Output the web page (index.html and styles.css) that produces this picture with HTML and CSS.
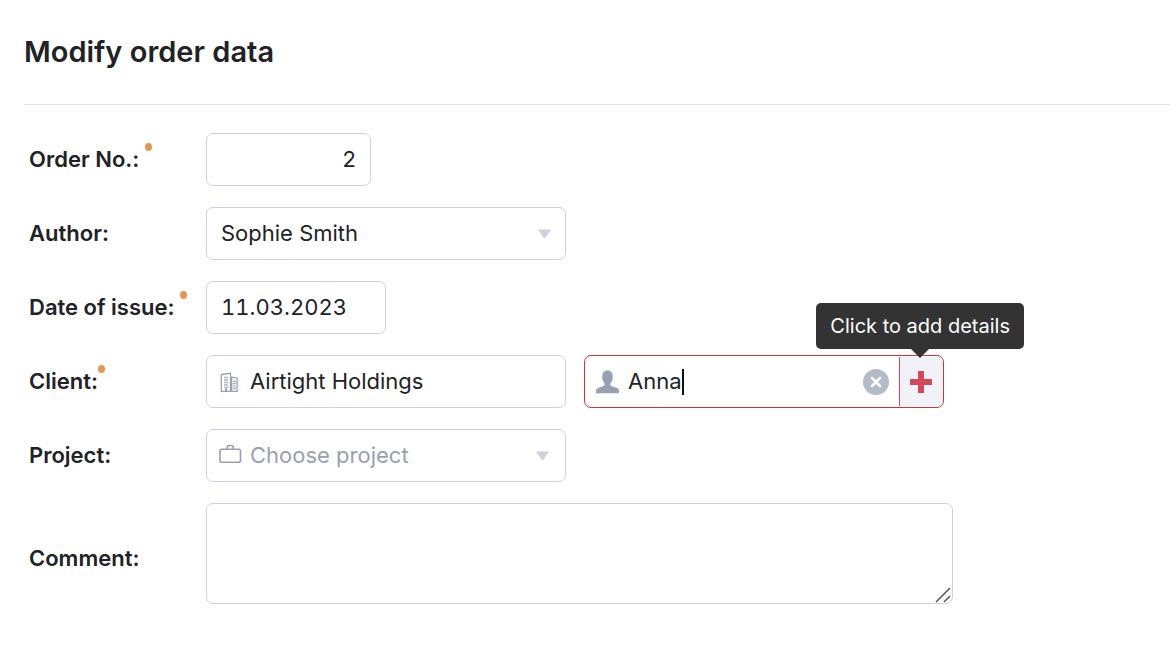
FILE: index.html
```html
<!DOCTYPE html>
<html lang="en">
<head>
  <meta charset="UTF-8">
  <meta name="viewport" content="width=device-width, initial-scale=1.0">
  <title>Modify order data</title>
  <link rel="stylesheet" href="styles.css">
</head>
<body>
  <header class="page-header">
    <h1>Modify order data</h1>
  </header>

  <form class="order-form">
    <div class="form-row">
      <label class="row-label" for="order-no">Order No.: <span class="required-dot"></span></label>
      <input class="field field-number" type="text" id="order-no" value="2">
    </div>

    <div class="form-row">
      <label class="row-label" for="author">Author:</label>
      <div class="field field-select">
        <select id="author">
          <option>Sophie Smith</option>
        </select>
        <svg class="arrow" viewBox="0 0 13 10" aria-hidden="true"><path d="M1 .5h11q1 0 .5 1L7.300 8.800q-.8 1-1.600 0L.5 1.500Q0 .5 1 .5z"/></svg>
      </div>
    </div>

    <div class="form-row">
      <label class="row-label" for="issue-date">Date of issue: <span class="required-dot"></span></label>
      <input class="field field-date" type="text" id="issue-date" value="11.03.2023">
    </div>

    <div class="form-row">
      <label class="row-label" for="client">Client:<span class="required-dot"></span></label>
      <div class="client-fields">
        <div class="field field-icon">
          <svg class="icon" viewBox="0 0 24 24" aria-hidden="true">
            <g fill="none" stroke="#98a1b0" stroke-width="1.300">
              <path d="M3.300 21.300V4.500l9.200-1.200v18z"/>
              <path d="M13.700 7.200l5.400 1v13.100h-5.400z"/>
            </g>
            <g fill="none" stroke="#98a1b0" stroke-width="1.300">
              <path d="M6.200 7.500h3.600M6.200 10h3.600M6.200 12.500h3.600M6.200 15h3.600M6.200 17.500h3.600" stroke-dasharray="1.600 .4"/>
              <path d="M15.200 11.300h2.400M15.200 13.700h2.400M15.200 16.100h2.400M15.200 18.500h2.400"/>
              <path d="M8 18.500v3" stroke-width="2"/>
            </g>
          </svg>
          <input type="text" id="client" value="Airtight Holdings">
        </div>

        <div class="field field-icon field-error">
          <svg class="icon" viewBox="0 0 24 24" aria-hidden="true"><path fill="#98a1b0" d="M11.500 .5c3.300 0 5.200 2.300 5.200 5.400 0 .7-.1 1.200-.2 1.700.7.2.5 1.700-.4 2.600-.4 1.600-1 2.500-1.800 3.200v1.700c.5.8 1.500 1.200 2.900 1.600 3.400 1 5.800 1.600 5.800 4.200V23.200H0v-2.300c0-2.600 2.400-3.200 5.800-4.200 1.400-.4 2.400-.8 2.900-1.600v-1.700c-.8-.7-1.400-1.600-1.800-3.200-.9-.9-1.100-2.400-.4-2.600-.1-.5-.2-1-.2-1.700C6.300 2.800 8.200 .5 11.500 .5z"/></svg>
          <input class="contact-input" type="text" aria-label="Contact" value="Anna">
          <span class="caret"></span>
          <button class="clear-btn" type="button" aria-label="Clear">
            <svg viewBox="0 0 26 26" aria-hidden="true"><circle cx="13" cy="13" r="13" fill="#b3bac8"/><path d="M9 9l8 8M17 9l-8 8" stroke="#fff" stroke-width="2.500" stroke-linecap="round"/></svg>
          </button>
          <button class="add-btn" type="button" aria-label="Add" aria-describedby="add-tip">
            <svg viewBox="0 0 22 22" aria-hidden="true"><path fill="#d4485c" d="M8.500 0h5q.5 0 .5.500V8h7.500q.5 0 .5.500v5q0 .5-.5.500H14v7.500q0 .5-.5.500h-5q-.5 0-.5-.5V14H.5q-.5 0-.5-.5v-5Q0 8 .5 8H8V.5Q8 0 8.500 0z"/></svg>
          </button>
          <div class="tooltip" id="add-tip" role="tooltip">Click to add details</div>
        </div>
      </div>
    </div>

    <div class="form-row">
      <label class="row-label" for="project">Project:</label>
      <div class="field field-icon field-select field-empty">
        <svg class="icon" viewBox="0 0 24 24" aria-hidden="true"><g fill="none" stroke="#98a1b0" stroke-width="1.600"><rect x="2" y="5.300" width="20.500" height="13" rx="1.800"/><path d="M9.200 5.300V3.500q0-2 2-2h2q2 0 2 2v1.800"/></g></svg>
        <select id="project">
          <option>Choose project</option>
        </select>
        <svg class="arrow" viewBox="0 0 13 10" aria-hidden="true"><path d="M1 .5h11q1 0 .5 1L7.300 8.800q-.8 1-1.600 0L.5 1.500Q0 .5 1 .5z"/></svg>
      </div>
    </div>

    <div class="form-row">
      <label class="row-label comment-label" for="comment">Comment:</label>
      <div class="comment-box">
        <textarea class="field" id="comment"></textarea>
        <svg class="resizer" viewBox="0 0 16 16" aria-hidden="true"><path d="M1 15L15 1M9 15l6-6" stroke="#555" stroke-width="1.500"/></svg>
      </div>
    </div>
  </form>
</body>
</html>
```
FILE: styles.css
```css
* {
  box-sizing: border-box;
}

body {
  font-family: Inter, "Liberation Sans", sans-serif;
  font-size: 22px;
  color: #212226;
  background: #fff;
  margin: 0;
  padding-left: 24px;
}

input,
select,
textarea,
button {
  font: inherit;
  color: inherit;
  margin: 0;
  padding: 0;
  border: none;
  background: none;
  outline: none;
}

.page-header {
  padding: 32px 0;
  border-bottom: 1px solid #e1e3ec;
}

h1 {
  margin: 0;
  font-size: 29px;
  line-height: 40px;
  font-weight: 600;
}

.order-form {
  display: flex;
  flex-direction: column;
  gap: 21px;
  padding: 28px 24px 28px 5px;
}

.form-row {
  display: grid;
  grid-template-columns: 177px 1fr;
  align-items: center;
}

.row-label {
  padding-bottom: 2px;
  font-weight: 600;
  line-height: 32px;
}

.comment-label {
  padding-top: 10px;
}

.required-dot {
  display: inline-block;
  width: 7px;
  height: 8px;
  border-radius: 50%;
  background: #e8964f;
  vertical-align: top;
}

.field {
  position: relative;
  display: flex;
  align-items: center;
  width: 100%;
  max-width: 360px;
  height: 53px;
  border: 1px solid #cfd1df;
  border-radius: 7px;
  background: #fff;
}

.field-number {
  max-width: 165px;
  padding: 0 14px 2px;
  text-align: right;
}

.field-date {
  max-width: 180px;
  padding: 0 14px 2px;
  font-variant-numeric: tabular-nums;
}

.field-select select {
  flex: 1;
  height: 100%;
  padding: 0 40px 2px 14px;
  appearance: none;
}

.arrow {
  position: absolute;
  right: 14px;
  width: 13px;
  height: 10px;
  fill: #cfd2de;
  pointer-events: none;
}

.field-icon {
  padding-left: 11px;
}

.icon {
  flex: none;
  width: 24px;
  height: 24px;
}

.field-icon input,
.field-icon select {
  flex: 1;
  min-width: 0;
  height: 100%;
  padding-left: 8px;
  padding-bottom: 2px;
}

.field-empty select {
  color: #98a1b0;
}

.field-empty .arrow {
  right: 16px;
}

.client-fields {
  display: flex;
  gap: 18px;
}

.field-error {
  border-color: #d0342f;
}

.field-icon .contact-input {
  flex: none;
  field-sizing: content;
  max-width: 220px;
  caret-color: transparent;
}

.caret {
  width: 2px;
  height: 26px;
  background: #111;
}

.clear-btn {
  display: flex;
  width: 26px;
  height: 26px;
  margin-left: auto;
  margin-right: 10px;
  cursor: pointer;
}

.add-btn {
  display: flex;
  align-items: center;
  justify-content: center;
  width: 43px;
  height: 49px;
  margin-right: 1px;
  border-left: 1px solid #d4485c;
  border-radius: 0 6px 6px 0;
  background: #f1f2f8;
  cursor: pointer;
}

.add-btn svg {
  width: 22px;
  height: 22px;
}

.tooltip {
  position: absolute;
  right: -81px;
  bottom: 58px;
  padding: 8px 14px;
  border-radius: 5px;
  background: #333;
  color: #fff;
  font-size: 20px;
  line-height: 30px;
  white-space: nowrap;
}

.tooltip::after {
  content: "";
  position: absolute;
  top: 100%;
  left: 50%;
  margin-left: -9px;
  border: 9px solid transparent;
  border-top-color: #333;
  border-bottom: none;
}

.comment-box {
  position: relative;
  display: flex;
  width: 100%;
  max-width: 747px;
}

.comment-box .field {
  max-width: none;
  height: 101px;
  padding: 12px 14px;
  resize: none;
}

.resizer {
  position: absolute;
  right: 2px;
  bottom: 1px;
  width: 16px;
  height: 16px;
  fill: none;
  pointer-events: none;
}
```
